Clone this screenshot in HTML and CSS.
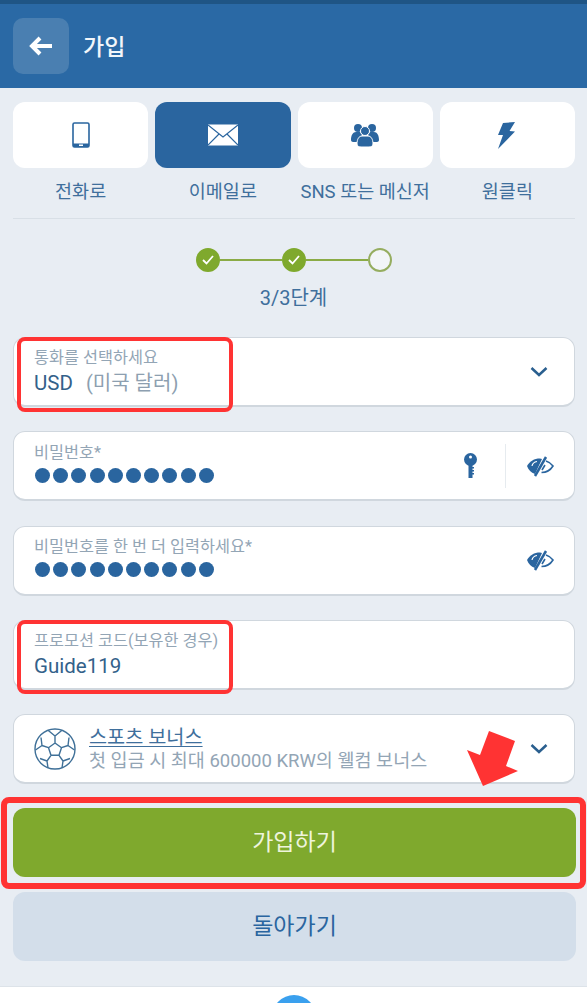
FILE: index.html
```html
<!DOCTYPE html>
<html lang="ko">
<head>
    <meta charset="UTF-8">
    <meta name="viewport" content="width=device-width, initial-scale=1.0">
    <title>가입</title>
    <link rel="stylesheet" href="styles.css">
</head>
<body>
    <div class="page">
        <header class="header">
            <div class="back-btn">
                <svg width="28" height="24" viewBox="0 0 28 24"><path d="M25 12H6M13 4l-8 8 8 8" fill="none" stroke="#fff" stroke-width="4"/></svg>
            </div>
            <h1>가입</h1>
        </header>

        <div class="tabs">
            <div class="tab">
                <div class="tab-box">
                    <svg width="18" height="26" viewBox="0 0 18 26"><rect x="1" y="1" width="16" height="24" rx="1.500" fill="none" stroke="#2a659f" stroke-width="1.600"/><rect x="1" y="21.500" width="16" height="3.500" fill="#2a659f"/><rect x="7" y="22.500" width="4" height="1.500" fill="#fff"/></svg>
                </div>
                <span>전화로</span>
            </div>
            <div class="tab active">
                <div class="tab-box">
                    <svg width="30" height="22" viewBox="0 0 30 22"><rect width="30" height="21" y="0.500" fill="#fff"/><path d="M0 1l15 12L30 1M0 21l11-11M30 21L19 10" fill="none" stroke="#2a659f" stroke-width="1.200"/></svg>
                </div>
                <span>이메일로</span>
            </div>
            <div class="tab">
                <div class="tab-box">
                    <svg width="30" height="24" viewBox="0 0 30 24" fill="#2a659f"><circle cx="8" cy="5" r="4"/><circle cx="22" cy="5" r="4"/><path d="M1 17c0-5 2-8 5-8h4l2 3-3 5v2H3c-1 0-2-1-2-2zM29 17c0-5-2-8-5-8h-4l-2 3 3 5v2h6c1 0 2-1 2-2z"/><circle cx="15" cy="8" r="4.500" stroke="#fff"/><path d="M7 21c0-5 2-8 5-8h6c3 0 5 3 5 8 0 2-2 3-4 3h-8c-2 0-4-1-4-3z" stroke="#fff"/></svg>
                </div>
                <span>SNS 또는 메신저</span>
            </div>
            <div class="tab">
                <div class="tab-box">
                    <svg width="18" height="27" viewBox="0 0 18 27"><path d="M5 1L17 0l-5.500 9 5.500.5L0 27l5-14H0z" fill="#2a659f"/></svg>
                </div>
                <span>원클릭</span>
            </div>
        </div>

        <div class="stepper">
            <div class="steps">
                <div class="step done"><svg width="14" height="12" viewBox="0 0 14 12"><path d="M2 6l3.500 3.500L12 2" fill="none" stroke="#fff" stroke-width="1.800"/></svg></div>
                <div class="step-line"></div>
                <div class="step done"><svg width="14" height="12" viewBox="0 0 14 12"><path d="M2 6l3.500 3.500L12 2" fill="none" stroke="#fff" stroke-width="1.800"/></svg></div>
                <div class="step-line"></div>
                <div class="step"></div>
            </div>
            <div class="step-label">3/3단계</div>
        </div>

        <div class="form">
            <div class="field">
                <div class="field-main">
                    <label>통화를 선택하세요</label>
                    <div class="value">USD <span class="muted">(미국 달러)</span></div>
                </div>
                <svg class="chevron" width="20" height="12" viewBox="0 0 20 12"><path d="M2.500 2l7.500 7 7.500-7" fill="none" stroke="#2a5f8f" stroke-width="2.500"/></svg>
            </div>

            <div class="field">
                <div class="field-main">
                    <label>비밀번호*</label>
                    <div class="dots"><i></i><i></i><i></i><i></i><i></i><i></i><i></i><i></i><i></i><i></i></div>
                </div>
                <svg class="key" width="14" height="25" viewBox="0 0 14 25" fill="#2a659f"><circle cx="6.500" cy="6.500" r="6.500"/><path d="M4.500 11h4v3h1.500v1.500H8.500V17H10v1.500H8.500V20H10v1.500H8.500V25h-4z"/><circle cx="6.500" cy="4" r="1.500" fill="#fff"/></svg>
                <div class="sep"></div>
                <svg class="eye" width="28" height="22" viewBox="0 0 28 22"><path d="M1 11c3-5 7-7.500 13-7.500l2 .5L9 19c-4-1.500-6.500-4-8-8z" fill="#2a659f"/><path d="M20 2L9 21" stroke="#2a659f" stroke-width="2.500"/><path d="M20 6c3 1 5.500 3 7 5-2.500 4-6.500 6.500-11.500 6.500M19 10l-3 5" fill="none" stroke="#2a659f" stroke-width="1.600"/><path d="M6 11c.5-2.500 2-4 5-4.500" fill="none" stroke="#fff" stroke-width="1.200"/></svg>
            </div>

            <div class="field">
                <div class="field-main">
                    <label>비밀번호를 한 번 더 입력하세요*</label>
                    <div class="dots"><i></i><i></i><i></i><i></i><i></i><i></i><i></i><i></i><i></i><i></i></div>
                </div>
                <svg class="eye" width="28" height="22" viewBox="0 0 28 22"><path d="M1 11c3-5 7-7.500 13-7.500l2 .5L9 19c-4-1.500-6.500-4-8-8z" fill="#2a659f"/><path d="M20 2L9 21" stroke="#2a659f" stroke-width="2.500"/><path d="M20 6c3 1 5.500 3 7 5-2.500 4-6.500 6.500-11.500 6.500M19 10l-3 5" fill="none" stroke="#2a659f" stroke-width="1.600"/><path d="M6 11c.5-2.500 2-4 5-4.500" fill="none" stroke="#fff" stroke-width="1.200"/></svg>
            </div>

            <div class="field">
                <div class="field-main">
                    <label>프로모션 코드(보유한 경우)</label>
                    <div class="value">Guide119</div>
                </div>
            </div>

            <div class="field bonus">
                <svg class="ball" width="42" height="42" viewBox="0 0 42 42" fill="none" stroke="#3f7098" stroke-width="1.400"><circle cx="21" cy="21" r="20"/><path d="M21 15l6.500 4.700-2.500 7.600h-8l-2.500-7.600zM21 15V8M27.500 19.700l6.500-2.200M25 27.300l4 5.700M17 27.300l-4 5.700M14.500 19.700L8 17.500M21 8l-7-5.800M21 8l7-5.800M34 17.500l1-8M34 17.500l6.500 4.500M29 33l7-2.500M29 33l-1 7M13 33l1 7M13 33l-7-2.500M8 17.500L1.500 22M8 17.500l-1-8"/></svg>
                <div class="field-main">
                    <div class="bonus-title">스포츠 보너스</div>
                    <div class="bonus-text">첫 입금 시 최대 600000 KRW의 웰컴 보너스</div>
                </div>
                <svg class="chevron" width="20" height="12" viewBox="0 0 20 12"><path d="M2.500 2l7.500 7 7.500-7" fill="none" stroke="#2a5f8f" stroke-width="2.500"/></svg>
            </div>
        </div>

        <div class="actions">
            <div class="btn btn-submit">가입하기</div>
            <div class="btn btn-back">돌아가기</div>
        </div>

        <div class="bottom-bar">
            <div class="bottom-circle"></div>
        </div>

        <!-- red marks drawn over the screenshot -->
        <div class="mark mark-currency"></div>
        <div class="mark mark-promo"></div>
        <div class="mark mark-submit"></div>
        <svg class="mark-arrow" width="52" height="56" viewBox="0 0 52 56"><path d="M22 0l26 10-9 25 12 5-35 15L0 19l13 5z" fill="#ff3333"/></svg>
    </div>
</body>
</html>
```

FILE: styles.css
```css
* {
    box-sizing: border-box;
}
html, body {
    margin: 0;
    padding: 0;
}
body {
    font-family: "Roboto", "Noto Sans CJK KR", sans-serif;
    background: #e8edf3;
    color: #2a5f8f;
}
.page {
    position: relative;
    width: 587px;
    height: 1003px;
    overflow: hidden;
    display: flex;
    flex-direction: column;
}
.header {
    height: 88px;
    flex: none;
    display: flex;
    align-items: center;
    gap: 14px;
    padding: 0 13px 1px;
    background: #2a69a5;
    border-top: 4px solid #1f5585;
}
.header h1 {
    margin: 0 0 2px;
    font-size: 23px;
    font-weight: 500;
    color: #f2f6fa;
}
.back-btn {
    width: 56px;
    height: 56px;
    display: flex;
    align-items: center;
    justify-content: center;
    background: #4a7fb1;
    border-radius: 10px;
}
.tabs {
    display: flex;
    gap: 7px;
    margin: 14px 12px 0 13px;
    height: 117px;
    border-bottom: 1px solid #d8dfe6;
}
.tab {
    flex: 1;
    text-align: center;
    font-size: 18.500px;
    color: #3f6f9c;
}
.tab-box {
    height: 66px;
    display: flex;
    align-items: center;
    justify-content: center;
    background: #fff;
    border-radius: 12px;
    margin-bottom: 12px;
}
.tab span {
    white-space: nowrap;
    line-height: 24px;
}
.tab.active .tab-box {
    background: #2a659f;
}
.stepper {
    margin-top: 29px;
    text-align: center;
}
.steps {
    display: flex;
    align-items: center;
    justify-content: center;
    margin-left: 1px;
}
.step {
    width: 24px;
    height: 24px;
    border-radius: 50%;
    display: flex;
    align-items: center;
    justify-content: center;
    background: #f2f5f8;
    border: 2px solid #95ad5f;
}
.step.done {
    background: #7fa92d;
    border-color: #7fa92d;
}
.step-line {
    width: 62px;
    height: 2px;
    background: #8aab45;
}
.step-label {
    margin-top: 14px;
    font-size: 20px;
    line-height: 24px;
    color: #3f6f9c;
}
.form {
    display: flex;
    flex-direction: column;
    gap: 24.250px;
    margin: 27px 12px 0 13px;
}
.field {
    height: 70px;
    display: flex;
    align-items: center;
    padding: 0 20px;
    background: #fff;
    border: 1px solid #d0d7de;
    border-bottom-width: 2px;
    border-radius: 12px;
}
.field-main {
    flex: 1;
    min-width: 0;
    padding-top: 3px;
}
.field label {
    display: block;
    font-size: 16.300px;
    line-height: 20px;
    color: #93a5b5;
}
.value {
    font-size: 20.500px;
    line-height: 30px;
    color: #33618a;
}
.value .muted {
    margin-left: 8px;
    font-size: 20px;
    color: #8d9fb0;
}
.dots {
    display: flex;
    gap: 3.200px;
    margin: 5px 0 9px 1px;
}
.dots i {
    width: 15px;
    height: 15px;
    border-radius: 50%;
    background: #2a659f;
}
.chevron {
    margin-right: 5px;
}
.key {
    margin-right: 27px;
}
.sep {
    width: 1px;
    height: 44px;
    margin-right: 20px;
    background: #e6ebef;
}
.bonus {
    gap: 13px;
}
.bonus .field-main {
    padding-top: 0;
}
.bonus-title {
    font-size: 19.700px;
    line-height: 24px;
    color: #3f6f9c;
    text-decoration: underline;
    text-underline-offset: 2px;
}
.bonus-text {
    font-size: 18.500px;
    line-height: 22px;
    color: #93a5b5;
    white-space: nowrap;
}
.actions {
    display: flex;
    flex-direction: column;
    gap: 15px;
    margin: 24px 11px 0 13px;
}
.btn {
    height: 69px;
    display: flex;
    align-items: center;
    justify-content: center;
    padding-bottom: 5px;
    border-radius: 12px;
    font-size: 23px;
}
.btn-submit {
    background: #7fa92d;
    color: #eef4dc;
}
.btn-back {
    background: #d3deea;
    color: #2a659f;
}
.bottom-bar {
    position: relative;
    margin-top: 25px;
    flex: 1;
    background: #fff;
    border-top: 1px solid #dde3e9;
    overflow: hidden;
}
.bottom-circle {
    position: absolute;
    left: 272px;
    top: 8px;
    width: 44px;
    height: 44px;
    border-radius: 50%;
    background: #3aa0ee;
}
.mark {
    position: absolute;
    border: 4px solid #ff3333;
    border-radius: 8px;
}
.mark-currency {
    left: 17px;
    top: 337px;
    width: 216px;
    height: 75px;
}
.mark-promo {
    left: 17px;
    top: 620px;
    width: 216px;
    height: 74px;
}
.mark-submit {
    left: 1px;
    top: 797px;
    width: 585px;
    height: 92px;
    border-width: 6px;
}
.mark-arrow {
    position: absolute;
    left: 467px;
    top: 731px;
}
```
